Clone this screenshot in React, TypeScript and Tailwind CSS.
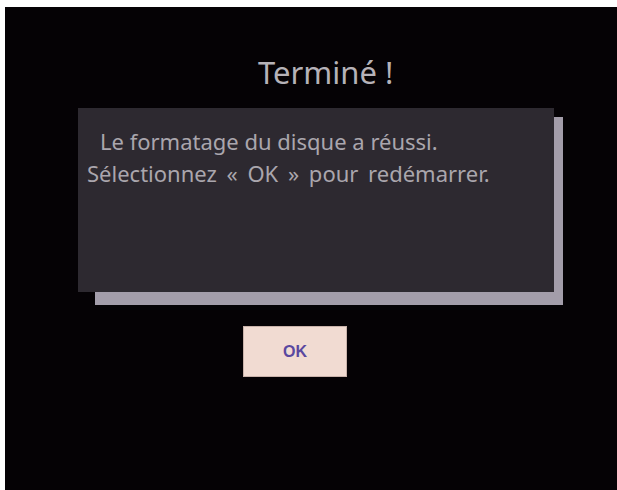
export default function App() {
  return (
    <div className="w-[617px] h-[490px] bg-white flex flex-col overflow-hidden">
      <div className="h-[7px] shrink-0" />
      <div className="flex-1 ml-[5px] bg-[#050205] flex flex-col items-start font-['Noto_Sans',sans-serif]">
        <h1 className="mt-[50px] ml-[253px] text-[31px] leading-none text-[#b6b2b8] font-normal">
          Terminé !
        </h1>

        <div className="relative mt-[20px] ml-[73px] w-[476px] h-[184px]">
          <div className="absolute left-[17px] top-[9px] w-[468px] h-[188px] bg-[#a39daa]" />
          <div className="relative w-full h-full bg-[#2d2930] pt-[17px] pl-[9px] text-[22px] leading-[32px] text-[#aaa6ad]">
            <p className="pl-[13px]">Le formatage du disque a réussi.</p>
            <p className="[word-spacing:4px]">Sélectionnez « OK » pour redémarrer.</p>
          </div>
        </div>

        <button className="mt-[34px] ml-[238px] w-[104px] h-[51px] bg-[#f1dbd2] border border-[#c9b2aa] flex items-center justify-center font-['Liberation_Sans',sans-serif] font-bold text-[16px] text-[#5a48a0]">
          OK
        </button>
      </div>
    </div>
  );
}
